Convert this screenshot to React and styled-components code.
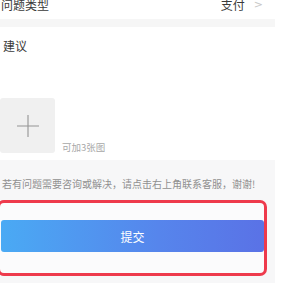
import React from "react";
import styled, { createGlobalStyle } from "styled-components";

const Global = createGlobalStyle`
  html, body { margin: 0; padding: 0; background: #ffffff; overflow: hidden; }
  body { font-family: "Noto Sans CJK SC", "Noto Sans", sans-serif; }
`;

const Page = styled.div`
  width: 275px;
  margin-top: -11px;
  display: flex;
  flex-direction: column;
`;

const Row = styled.div`
  height: 30px;
  display: flex;
  align-items: center;
  justify-content: space-between;
  padding: 0 0 0 1px;
  font-size: 12px;
  color: #3a3a3a;
`;

const Value = styled.div`
  display: flex;
  align-items: center;
  gap: 9px;
  margin-right: 12px;
`;

const Chevron = styled.span`
  color: #c8c8c8;
  font-size: 11px;
  font-family: "DejaVu Sans", sans-serif;
`;

const Divider = styled.div`
  height: 8px;
  background: #f6f6f6;
`;

const Section = styled.div`
  padding: 13px 0 7px 3px;
  display: flex;
  flex-direction: column;
`;

const Label = styled.div`
  font-size: 12px;
  line-height: 12px;
  color: #3a3a3a;
`;

const TextArea = styled.div`
  height: 46px;
`;

const UploadRow = styled.div`
  display: flex;
  align-items: flex-end;
  gap: 7px;
  margin-left: -3px;
`;

const AddBox = styled.div`
  width: 55px;
  height: 55px;
  background: #f0f0f0;
  border-radius: 3px;
  display: flex;
  align-items: center;
  justify-content: center;
`;

const Hint = styled.div`
  font-size: 9.5px;
  line-height: 12px;
  color: #a8a8a8;
`;

const Footer = styled.div`
  background: #f7f7f8;
  padding: 18px 0 20px 2px;
  display: flex;
  flex-direction: column;
`;

const Notice = styled.div`
  font-size: 10px;
  line-height: 12px;
  color: #909090;
  white-space: nowrap;
`;

const Highlight = styled.div`
  margin: 10px 0 0 -5px;
  width: 263px;
  border: 3px solid #ee3a4c;
  border-radius: 7px;
  background: #fbfbfc;
  padding: 17px 0 21px 1px;
`;

const SubmitButton = styled.div`
  height: 32px;
  border-radius: 3px;
  background: linear-gradient(90deg, #4aaaf4 0%, #5685ec 60%, #5a72e6 100%);
  color: #fff;
  font-size: 12px;
  display: flex;
  align-items: center;
  justify-content: center;
`;

export default function App() {
  return (
    <>
      <Global />
      <Page>
        <Row>
          <span>问题类型</span>
          <Value>
            <span>支付</span>
            <Chevron>&gt;</Chevron>
          </Value>
        </Row>
        <Divider />
        <Section>
          <Label>建议</Label>
          <TextArea />
          <UploadRow>
            <AddBox>
              <svg width="24" height="24" viewBox="0 0 24 24">
                <path d="M12 1 V23 M1 12 H23" stroke="#949494" strokeWidth="1.1" fill="none" />
              </svg>
            </AddBox>
            <Hint>可加3张图</Hint>
          </UploadRow>
        </Section>
        <Footer>
          <Notice>若有问题需要咨询或解决，请点击右上角联系客服，谢谢!</Notice>
          <Highlight>
            <SubmitButton>提交</SubmitButton>
          </Highlight>
        </Footer>
      </Page>
    </>
  );
}
